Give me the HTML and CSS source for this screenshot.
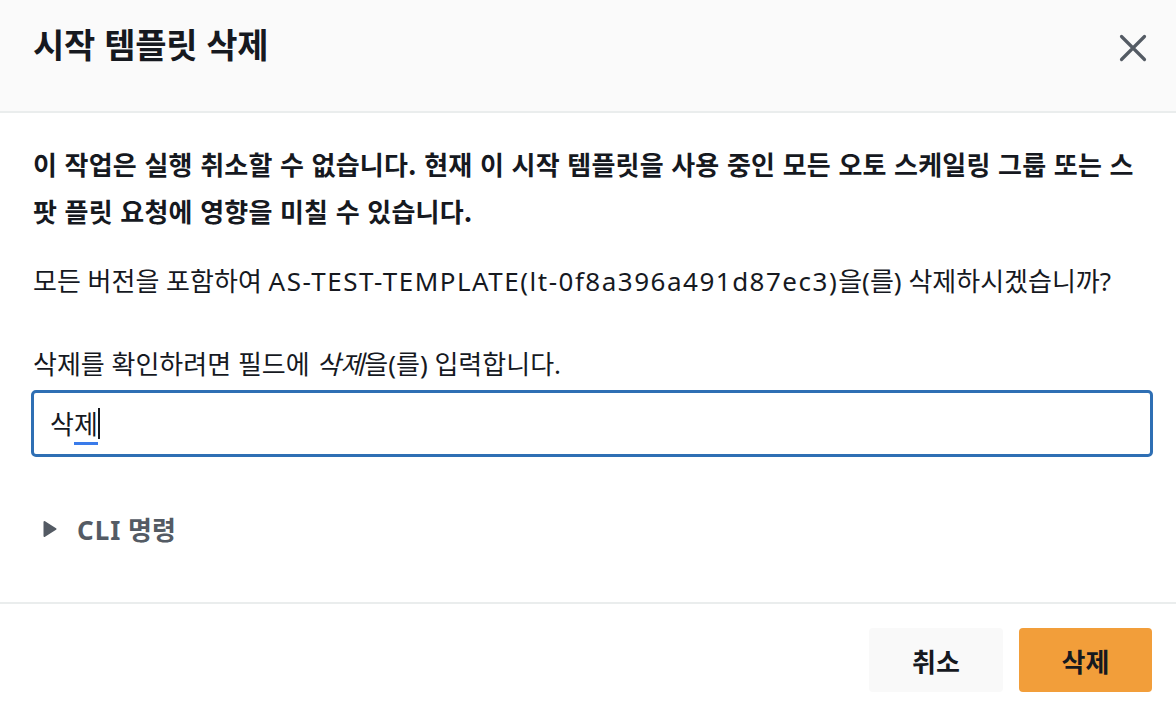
FILE: index.html
```html
<!DOCTYPE html>
<html lang="ko">
<head>
<meta charset="utf-8">
<link rel="stylesheet" href="styles.css">
</head>
<body>
<div class="dialog">
  <header class="dlg-header">
    <h1 class="dlg-title">시작 템플릿 삭제</h1>
    <button class="close-btn" aria-label="닫기">
      <svg width="28" height="28" viewBox="0 0 28 28"><path d="M2.5 2.5 L25.5 25.5 M25.5 2.5 L2.5 25.5" stroke="#545b64" stroke-width="3.2" stroke-linecap="round" fill="none"/></svg>
    </button>
  </header>
  <main class="dlg-body">
    <p class="warn">이 작업은 실행 취소할 수 없습니다. 현재 이 시작 템플릿을 사용 중인 모든 오토 스케일링 그룹 또는 스팟 플릿 요청에 영향을 미칠 수 있습니다.</p>
    <p class="question">모든 버전을 포함하여 <span class="latin">AS-TEST-TEMPLATE(lt-0f8a396a491d87ec3)</span>을(를) 삭제하시겠습니까?</p>
    <label class="confirm-label">삭제를 확인하려면 필드에 <i>삭제</i>을(를) 입력합니다.</label>
    <div class="input">
      <span class="typed">삭<span class="composing">제</span></span><span class="caret"></span>
    </div>
    <div class="expander">
      <svg class="caret-icon" width="14" height="18" viewBox="0 0 14 18"><path d="M1.5 2 L12.5 9 L1.5 16 Z" fill="#545b64" stroke="#545b64" stroke-width="2" stroke-linejoin="round"/></svg>
      <span class="exp-label"><span class="latin-b">CLI</span> 명령</span>
    </div>
  </main>
  <footer class="dlg-footer">
    <button class="btn btn-cancel">취소</button>
    <button class="btn btn-primary">삭제</button>
  </footer>
</div>
</body>
</html>
```

FILE: styles.css
```css
* { box-sizing: border-box; }
html, body {
  margin: 0;
  padding: 0;
  background: #ffffff;
}
body {
  font-family: "Noto Sans", "Noto Sans CJK KR", sans-serif;
  color: #16191f;
  width: 1176px;
  height: 702px;
  overflow: hidden;
}
.dialog {
  display: flex;
  flex-direction: column;
  height: 702px;
}
.dlg-header {
  height: 113px;
  background: #fafafa;
  border-bottom: 2px solid #eaeded;
  display: flex;
  align-items: flex-start;
  justify-content: space-between;
  padding: 24px 29px 0 33px;
}
.dlg-title {
  margin: 0;
  font-size: 34px;
  font-weight: 700;
  line-height: 40px;
  letter-spacing: -0.3px;
  font-family: "Noto Sans CJK KR", sans-serif;
}
.close-btn {
  background: none;
  border: 0;
  padding: 0;
  margin-top: 10px;
  width: 28px;
  height: 28px;
  display: flex;
}
.dlg-body {
  padding: 27px 32px 0 33px;
  flex: 1;
  font-size: 26px;
}
.warn {
  margin: 0;
  font-weight: 700;
  line-height: 47px;
  letter-spacing: 0.2px;
  font-family: "Noto Sans CJK KR", sans-serif;
}
.question {
  margin: 24px 0 0;
  line-height: 47px;
}
.latin {
  letter-spacing: 1.5px;
}
.confirm-label {
  display: block;
  margin-top: 36px;
  line-height: 47px;
}
.confirm-label i {
  font-style: italic;
}
.input {
  margin: 2px 0 0 -2px;
  width: 1122px;
  height: 67px;
  border: 3px solid #2f6fb4;
  border-radius: 5px;
  display: flex;
  align-items: center;
  padding-left: 16px;
}
.typed {
  line-height: 32px;
  color: #16191f;
}
.composing {
  border-bottom: 3px solid #3a7bea;
}
.caret {
  display: inline-block;
  width: 2px;
  height: 31px;
  background: #16191f;
}
.expander {
  margin-top: 48px;
  display: flex;
  align-items: center;
  gap: 20px;
  padding-left: 10px;
  height: 47px;
}
.exp-label {
  font-weight: 700;
  color: #545b64;
}
.latin-b {
  letter-spacing: 1px;
}
.dlg-footer {
  border-top: 2px solid #eaeded;
  padding: 24px 24px 10px;
  display: flex;
  justify-content: flex-end;
  gap: 16px;
}
.btn {
  height: 64px;
  width: 134px;
  border: 0;
  border-radius: 4px;
  font-size: 26px;
  font-weight: 700;
  font-family: "Noto Sans CJK KR", sans-serif;
  color: #16191f;
}
.btn-cancel {
  background: #f9f9f9;
}
.btn-primary {
  background: #f29e3a;
  width: 133px;
}
```
